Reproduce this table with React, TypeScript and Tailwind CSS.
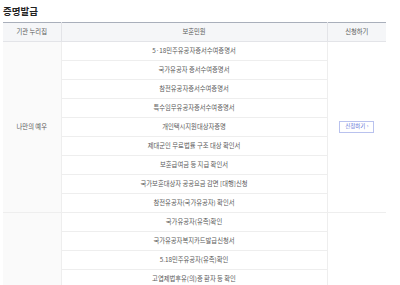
import React from "react";

const group1 = [
  "5·18민주유공자증서수여증명서",
  "국가유공자 증서수여증명서",
  "참전유공자증서수여증명서",
  "특수임무유공자증서수여증명서",
  "개인택시지원대상자증명",
  "제대군인 무료법률 구조 대상 확인서",
  "보훈급여금 등 지급 확인서",
  "국가보훈대상자 공공요금 감면 [대행]신청",
  "참전유공자(국가유공자) 확인서",
];
const group2 = [
  "국가유공자(유족)확인",
  "국가유공자복지카드발급신청서",
  "5.18민주유공자(유족)확인",
  "고엽제법후유(의)증 환자 등 확인",
];

export default function App() {
  const font = { fontFamily: '"Noto Sans CJK KR", "Noto Sans", sans-serif' };
  return (
    <div className="w-[400px] h-[285px] overflow-hidden bg-white" style={font}>
      <div className="pl-[3px] pr-[14px]">
        <h2 className="text-[9.5px] leading-[12px] font-bold text-[#222] pt-[5px] h-[22px]">증명발급</h2>
        <table className="w-full border-collapse table-fixed text-[6.3px] text-[#5a5a5a]">
          <colgroup>
            <col className="w-[58px]" />
            <col />
            <col className="w-[59px]" />
          </colgroup>
          <thead>
            <tr className="h-[19px] bg-[#f5f6f8] border-t-[1.5px] border-[#a9afbb]">
              <th className="font-normal border-b border-[#e3e4e8] border-r text-center">기관 누리집</th>
              <th className="font-normal border-b border-[#e3e4e8] border-r text-center">보훈민원</th>
              <th className="font-normal border-b border-[#e3e4e8] text-center">신청하기</th>
            </tr>
          </thead>
          <tbody>
            {group1.map((t, i) => (
              <tr key={t} className="h-[19px]">
                {i === 0 && (
                  <td rowSpan={group1.length} className="bg-[#fafafa] text-center border-r border-b border-[#eeeeee]">
                    나만의 예우
                  </td>
                )}
                <td className="text-center border-b border-r border-[#eeeeee]">{t}</td>
                {i === 0 && (
                  <td rowSpan={group1.length} className="text-center border-b border-[#eeeeee]">
                    <span className="inline-flex items-center h-[12px] px-[5px] border border-[#b9c2ee] text-[#5b6fd6] text-[5.5px] leading-none">
                      신청하기 ›
                    </span>
                  </td>
                )}
              </tr>
            ))}
            {group2.map((t, i) => (
              <tr key={t} className="h-[19px]">
                {i === 0 && (
                  <td rowSpan={group2.length} className="bg-[#fafafa] border-r border-[#eeeeee]"></td>
                )}
                <td className="text-center border-b border-r border-[#eeeeee]">{t}</td>
                {i === 0 && <td rowSpan={group2.length}></td>}
              </tr>
            ))}
          </tbody>
        </table>
      </div>
    </div>
  );
}
